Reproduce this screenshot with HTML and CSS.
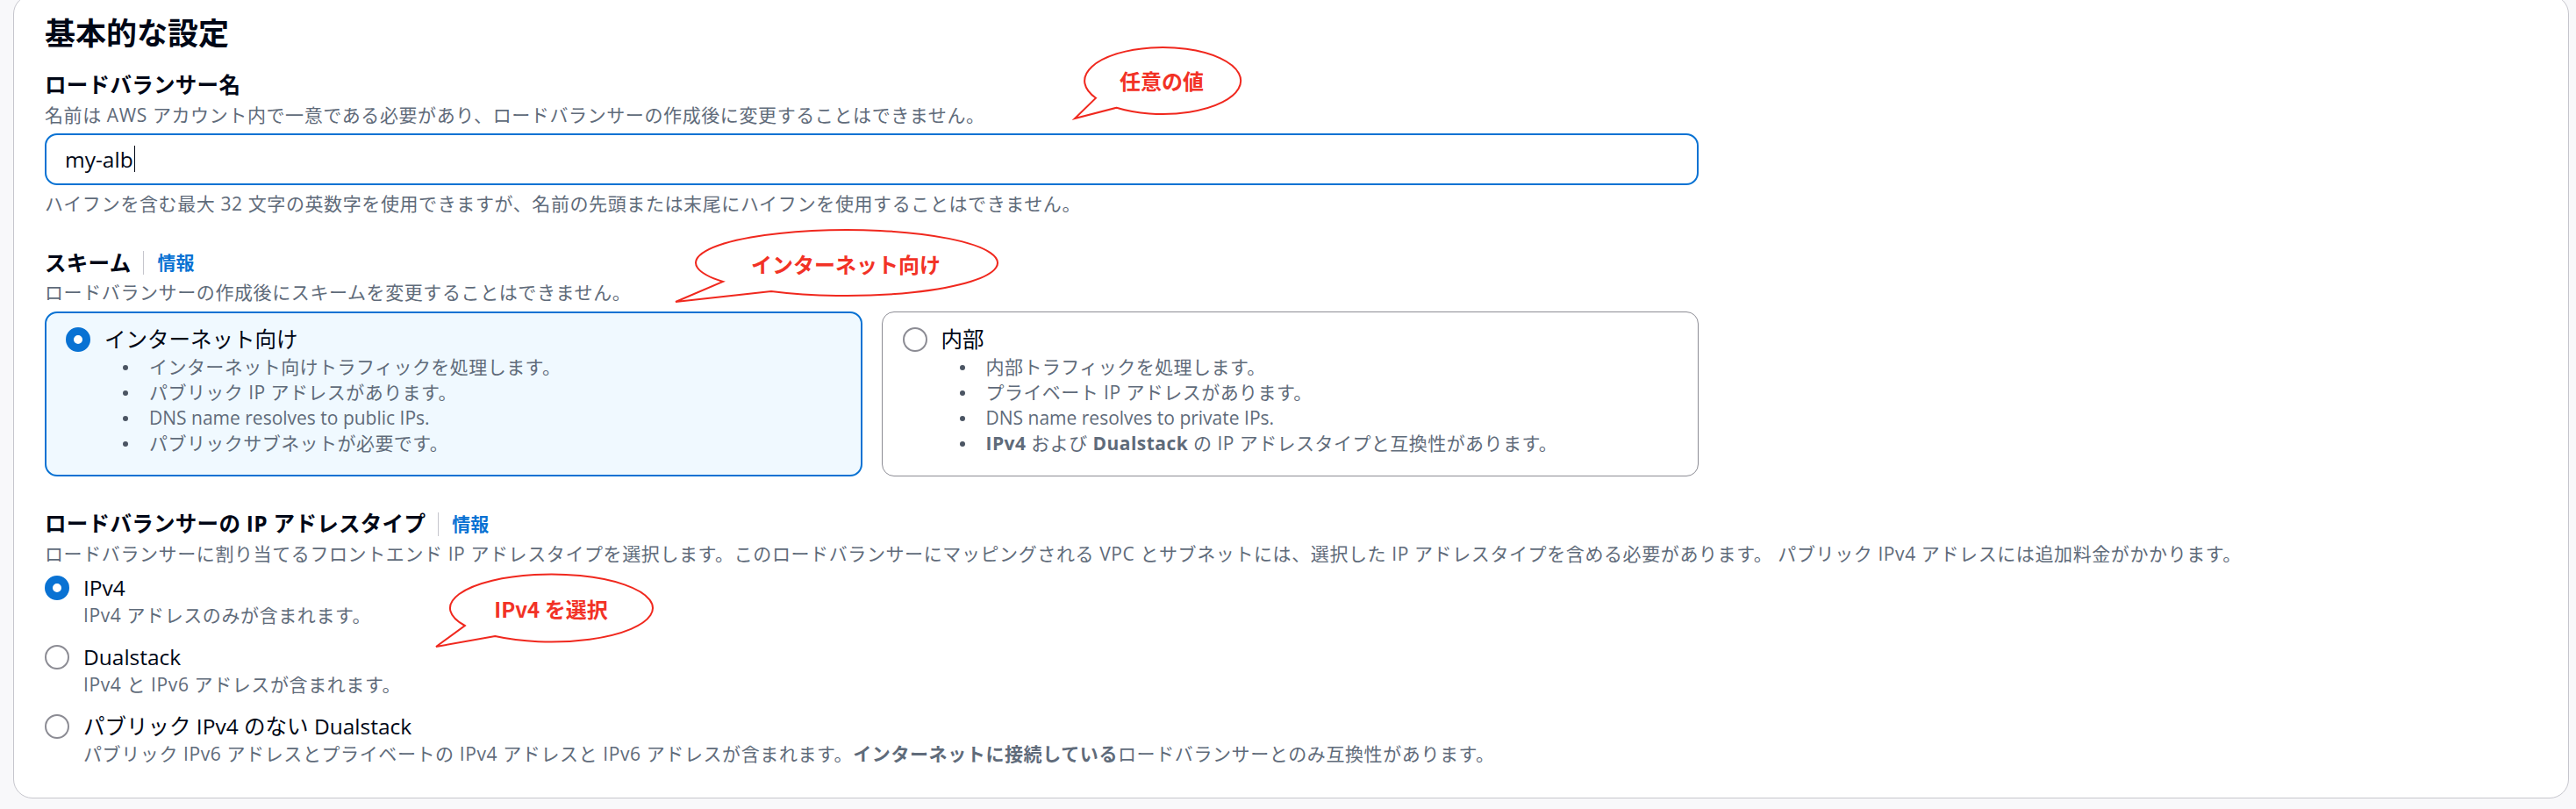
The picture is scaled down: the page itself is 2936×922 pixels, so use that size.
FILE: index.html
```html
<!DOCTYPE html>
<html lang="ja">
<head>
<meta charset="utf-8">
<title>基本的な設定</title>
<link rel="stylesheet" href="styles.css">
</head>
<body>
<div class="page">
  <section class="container">
    <h2 class="title">基本的な設定</h2>

    <div class="field">
      <div class="label-row"><span class="label">ロードバランサー名</span></div>
      <div class="desc">名前は AWS アカウント内で一意である必要があり、ロードバランサーの作成後に変更することはできません。</div>
      <div class="input"><span class="value">my-alb</span><span class="caret"></span></div>
      <div class="constraint">ハイフンを含む最大 32 文字の英数字を使用できますが、名前の先頭または末尾にハイフンを使用することはできません。</div>
    </div>

    <div class="field">
      <div class="label-row"><span class="label">スキーム</span><a class="info">情報</a></div>
      <div class="desc">ロードバランサーの作成後にスキームを変更することはできません。</div>
      <div class="tiles">
        <div class="tile selected">
          <div class="radio-row"><span class="radio checked"></span><span class="radio-label">インターネット向け</span></div>
          <ul class="bullets">
            <li><span>インターネット向けトラフィックを処理します。</span></li>
            <li><span>パブリック IP アドレスがあります。</span></li>
            <li class="latin"><span>DNS name resolves to public IPs.</span></li>
            <li><span>パブリックサブネットが必要です。</span></li>
          </ul>
        </div>
        <div class="tile">
          <div class="radio-row"><span class="radio"></span><span class="radio-label">内部</span></div>
          <ul class="bullets">
            <li><span>内部トラフィックを処理します。</span></li>
            <li><span>プライベート IP アドレスがあります。</span></li>
            <li class="latin"><span>DNS name resolves to private IPs.</span></li>
            <li><span><b>IPv4</b> および <b>Dualstack</b> の IP アドレスタイプと互換性があります。</span></li>
          </ul>
        </div>
      </div>
    </div>

    <div class="field">
      <div class="label-row"><span class="label">ロードバランサーの IP アドレスタイプ</span><a class="info">情報</a></div>
      <div class="desc">ロードバランサーに割り当てるフロントエンド IP アドレスタイプを選択します。このロードバランサーにマッピングされる VPC とサブネットには、選択した IP アドレスタイプを含める必要があります。 パブリック IPv4 アドレスには追加料金がかかります。</div>
      <div class="radio-group">
        <div class="radio-item">
          <div class="radio-row"><span class="radio checked"></span><span class="radio-label">IPv4</span></div>
          <div class="radio-desc">IPv4 アドレスのみが含まれます。</div>
        </div>
        <div class="radio-item">
          <div class="radio-row"><span class="radio"></span><span class="radio-label">Dualstack</span></div>
          <div class="radio-desc">IPv4 と IPv6 アドレスが含まれます。</div>
        </div>
        <div class="radio-item">
          <div class="radio-row"><span class="radio"></span><span class="radio-label">パブリック IPv4 のない Dualstack</span></div>
          <div class="radio-desc">パブリック IPv6 アドレスとプライベートの IPv4 アドレスと IPv6 アドレスが含まれます。<b>インターネットに接続している</b>ロードバランサーとのみ互換性があります。</div>
        </div>
      </div>
    </div>
  </section>

  <svg class="callouts" width="2936" height="922" viewBox="0 0 2936 922" xmlns="http://www.w3.org/2000/svg">
    <path class="bubble" d="M1272.6 122.7 L1225 135 L1249 111.7 A89 38 0 1 1 1272.6 122.7 Z"/>
    <text class="bubble-text" x="1324" y="91" text-anchor="middle" dominant-baseline="central">任意の値</text>

    <path class="bubble" d="M879 332 L770 344 L824 321 A172 37.5 0 1 1 879 332 Z"/>
    <text class="bubble-text" x="964" y="300" text-anchor="middle" dominant-baseline="central">インターネット向け</text>

    <path class="bubble" d="M564.3 725 L497 737 L529.8 713 A115.5 38.5 0 1 1 564.3 725 Z"/>
    <text class="bubble-text" x="628" y="693" text-anchor="middle" dominant-baseline="central">IPv4 を選択</text>
  </svg>
</div>
</body>
</html>
```

FILE: styles.css
```css
* {
  box-sizing: border-box;
}

html,
body {
  margin: 0;
  padding: 0;
}

body {
  background: #f8f8fa;
  font-family: "Open Sans", "Noto Sans CJK JP", sans-serif;
  color: #000716;
  overflow: hidden;
}

.page {
  position: relative;
  display: flow-root;
  padding: 0 8px 0 15px;
}

.container {
  margin-top: -6px;
  background: #ffffff;
  border: 1px solid #c6c6cd;
  border-radius: 22px;
  padding: 22px 35px 36px;
}

.title {
  margin: 0 0 19px;
  font-size: 35px;
  line-height: 42px;
  font-weight: 700;
}

.field + .field {
  margin-top: 35px;
}

.label-row {
  display: flex;
  align-items: center;
  height: 38.5px;
}

.label {
  font-size: 24.5px;
  line-height: 38.5px;
  font-weight: 700;
  letter-spacing: 0.3px;
}

.info {
  margin-left: 14px;
  padding-left: 15px;
  border-left: 1.5px solid #c6c6cd;
  font-size: 21px;
  line-height: 27px;
  font-weight: 700;
  color: #0972d3;
}

.desc,
.constraint {
  font-size: 21px;
  line-height: 28px;
  color: #5f6b7a;
  letter-spacing: 0.6px;
}

.input {
  margin-top: 7px;
  width: 1885px;
  height: 59px;
  border: 2px solid #0972d3;
  border-radius: 14px;
  padding: 0 21px;
  display: flex;
  align-items: center;
  font-size: 24.5px;
  color: #000716;
}

.caret {
  width: 1.5px;
  height: 30px;
  margin-left: 1px;
  background: #000716;
}

.constraint {
  margin-top: 7px;
}

.tiles {
  margin-top: 8px;
  width: 1885px;
  display: grid;
  grid-template-columns: 1fr 1fr;
  column-gap: 22px;
}

.tile {
  border: 1px solid #8c8c94;
  border-radius: 14px;
  padding: 13px 21px 22px 23px;
  background: #ffffff;
}

.tile.selected {
  border: 2px solid #0972d3;
  padding: 12px 20px 21px 22px;
  background: #f0f9ff;
}

.radio-row {
  display: flex;
  align-items: center;
  height: 35px;
}

.radio {
  flex: none;
  width: 28px;
  height: 28px;
  border-radius: 50%;
  border: 2px solid #8c8c94;
  background: #ffffff;
}

.radio.checked {
  border: 9px solid #0972d3;
}

.radio-label {
  margin-left: 16px;
  font-size: 24.5px;
  line-height: 35px;
  color: #000716;
}

.bullets {
  list-style: none;
  margin: 0;
  padding: 0 0 0 65px;
}

.bullets li {
  display: flex;
  font-size: 21px;
  line-height: 29px;
  color: #5f6b7a;
  letter-spacing: 0.45px;
}

.bullets li.latin {
  letter-spacing: 0;
}

.bullets li::before {
  content: "";
  flex: none;
  width: 6px;
  height: 6px;
  border-radius: 50%;
  background: #4b5563;
  margin: 11.5px 24px 0 0;
}

.bullets b,
.radio-desc b {
  font-weight: 700;
}

.radio-group {
  margin-top: 7.5px;
  display: flex;
  flex-direction: column;
  gap: 16px;
}

.radio-desc {
  padding-left: 44px;
  font-size: 21px;
  line-height: 28px;
  color: #5f6b7a;
  letter-spacing: 0.6px;
}

.callouts {
  position: absolute;
  top: 0;
  left: 0;
  pointer-events: none;
}

.bubble {
  fill: #ffffff;
  stroke: #f0281e;
  stroke-width: 2;
  stroke-linejoin: miter;
}

.bubble-text {
  font-family: "Noto Sans CJK JP", "Open Sans", sans-serif;
  font-size: 24px;
  font-weight: 700;
  fill: #f23226;
}
```
